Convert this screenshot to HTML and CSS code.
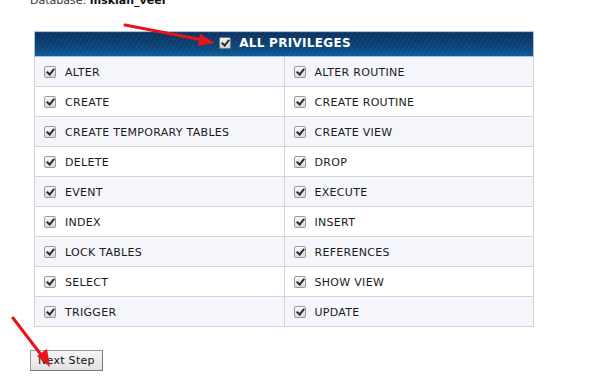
FILE: index.html
```html
<!DOCTYPE html>
<html>
<head>
  <title>Add User To Database</title>
  <link rel="stylesheet" href="styles.css">
</head>
<body>
  <div class="db-line">Database: <b>mskian_veer</b></div>
  <table class="privs">
    <thead>
      <tr>
        <th colspan="2"><label><input type="checkbox" checked> ALL PRIVILEGES</label></th>
      </tr>
    </thead>
    <tbody>
      <tr><td><label><input type="checkbox" checked> ALTER</label></td><td><label><input type="checkbox" checked> ALTER ROUTINE</label></td></tr>
      <tr><td><label><input type="checkbox" checked> CREATE</label></td><td><label><input type="checkbox" checked> CREATE ROUTINE</label></td></tr>
      <tr><td><label><input type="checkbox" checked> CREATE TEMPORARY TABLES</label></td><td><label><input type="checkbox" checked> CREATE VIEW</label></td></tr>
      <tr><td><label><input type="checkbox" checked> DELETE</label></td><td><label><input type="checkbox" checked> DROP</label></td></tr>
      <tr><td><label><input type="checkbox" checked> EVENT</label></td><td><label><input type="checkbox" checked> EXECUTE</label></td></tr>
      <tr><td><label><input type="checkbox" checked> INDEX</label></td><td><label><input type="checkbox" checked> INSERT</label></td></tr>
      <tr><td><label><input type="checkbox" checked> LOCK TABLES</label></td><td><label><input type="checkbox" checked> REFERENCES</label></td></tr>
      <tr><td><label><input type="checkbox" checked> SELECT</label></td><td><label><input type="checkbox" checked> SHOW VIEW</label></td></tr>
      <tr><td><label><input type="checkbox" checked> TRIGGER</label></td><td><label><input type="checkbox" checked> UPDATE</label></td></tr>
    </tbody>
  </table>
  <button class="next-btn">Next Step</button>

  <!-- annotation arrows -->
  <svg class="arrow arrow-top" width="100" height="30" viewBox="0 0 100 30">
    <line x1="2" y1="2" x2="80" y2="17" stroke="#e8141a" stroke-width="3" stroke-linecap="round"/>
    <polygon points="92,20 77,11 75,23" fill="#e8141a"/>
  </svg>
  <svg class="arrow arrow-bottom" width="50" height="60" viewBox="0 0 50 60">
    <line x1="2" y1="2" x2="31" y2="40" stroke="#e8141a" stroke-width="3" stroke-linecap="round"/>
    <polygon points="39,51 26,40 36,33" fill="#e8141a"/>
  </svg>
</body>
</html>
```

FILE: styles.css
```css
body {
  font-family: "DejaVu Sans", Verdana, sans-serif;
  font-size: 11px;
  color: #222;
  background: #fff;
  margin: 0;
  padding: 0 0 0 30px;
  position: relative;
}
.db-line {
  margin-top: -6px;
  height: 37px;
  font-size: 11px;
  color: #333;
}
.db-line b {
  color: #111;
}
input[type="checkbox"] {
  appearance: none;
  -webkit-appearance: none;
  position: relative;
  margin: 0;
  width: 12px;
  height: 12px;
  border: 1px solid #9a9a9a;
  border-radius: 2px;
  background: linear-gradient(#fafafa, #d9d9d9);
  flex-shrink: 0;
}
input[type="checkbox"]:checked::after {
  content: "";
  position: absolute;
  left: 3px;
  top: 0px;
  width: 3px;
  height: 6px;
  border: solid #2b2b2b;
  border-width: 0 2px 2px 0;
  transform: rotate(40deg);
}
.privs {
  border-collapse: collapse;
  width: 500px;
  margin-left: 4px;
  border: 1px solid #c9d3df;
}
.privs th {
  height: 24px;
  padding: 0;
  color: #fff;
  font-size: 12px;
  font-weight: bold;
  text-align: center;
  letter-spacing: 0.3px;
  background:
    repeating-linear-gradient(-60deg, rgba(255,255,255,0.07) 0 1px, transparent 1px 4px),
    linear-gradient(#0c2f5c, #0a4478 60%, #0b5b9c);
  border: 1px solid #a9c3dc;
}
.privs th label {
  display: inline-flex;
  align-items: center;
  gap: 8px;
  margin-left: 2px;
}
.privs th input {
  border-color: #6c7c8e;
  background: linear-gradient(#f2f2f2, #cfcfcf);
}
.privs td {
  height: 27px;
  padding: 2px 0 0 9px;
  width: 50%;
  border: 1px solid #d2d4d8;
  color: #1a1a1a;
  letter-spacing: 0.3px;
}
.privs tbody tr:nth-child(odd) td {
  background: #f4f6fb;
}
.privs td label {
  display: flex;
  align-items: center;
  gap: 9px;
}
.privs td input {
  margin-top: -2px;
}
.next-btn {
  margin-top: 23px;
  font-family: "DejaVu Sans", Verdana, sans-serif;
  font-size: 11px;
  letter-spacing: 0.3px;
  color: #111;
  padding: 2px 7px;
  height: 21px;
  background: linear-gradient(#f6f6f6, #e2e2e2);
  border: 1px solid #9a9a9a;
  border-right-color: #777;
  border-bottom-color: #777;
}
.arrow {
  position: absolute;
}
.arrow-top {
  left: 123px;
  top: 23px;
}
.arrow-bottom {
  left: 11px;
  top: 316px;
}
```
